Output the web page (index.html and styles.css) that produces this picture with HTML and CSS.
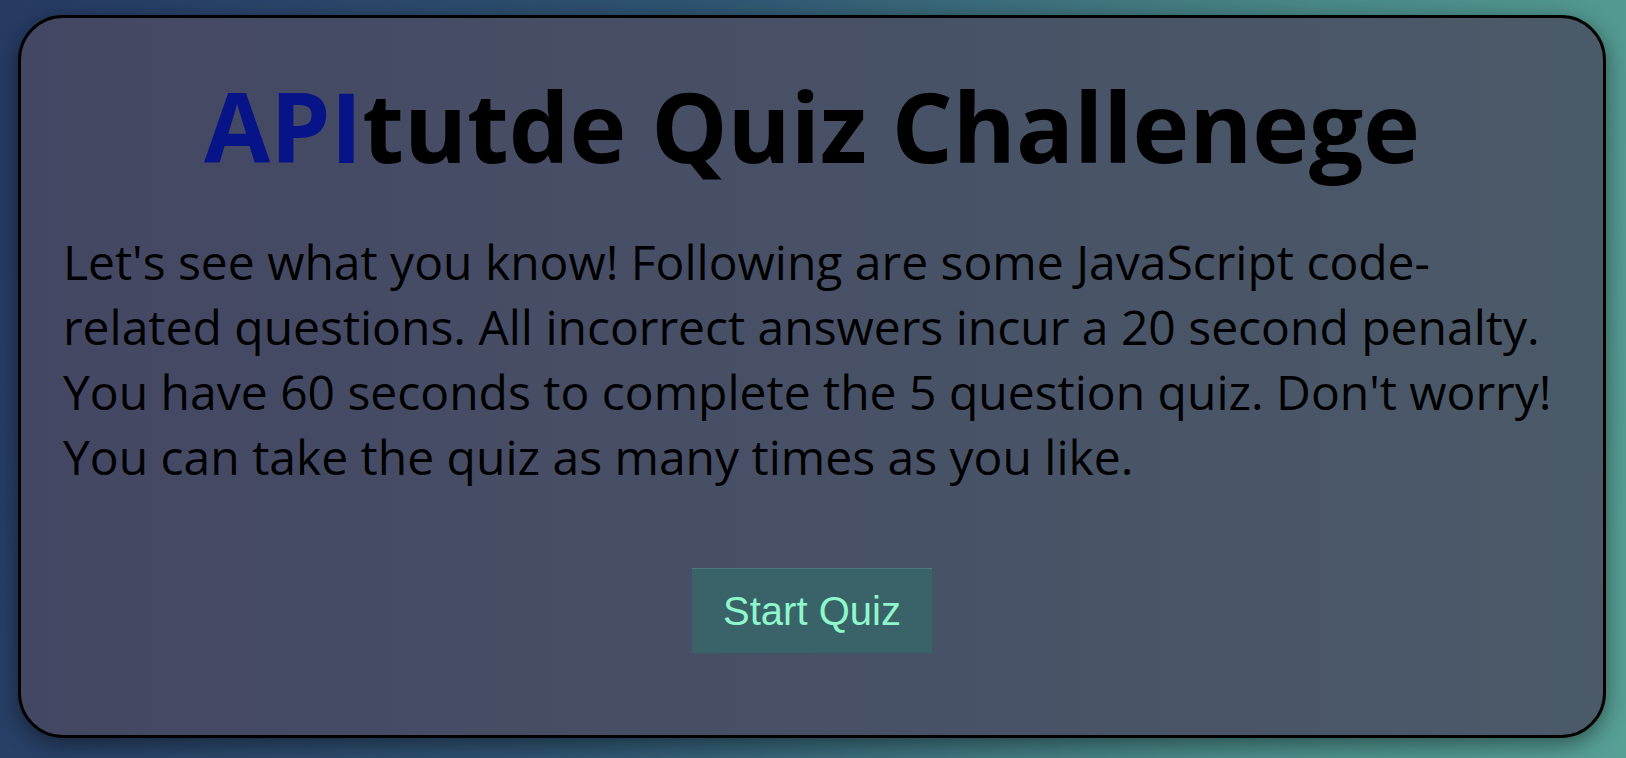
FILE: index.html
```html
<!DOCTYPE html>
<html lang="en">
<head>
<meta charset="utf-8">
<title>APItutde Quiz Challenege</title>
<link rel="stylesheet" href="styles.css">
</head>
<body>
  <main class="card">
    <h1 class="title"><span class="title-accent">API</span>tutde Quiz Challenege</h1>
    <p class="intro">Let's see what you know! Following are some JavaScript code-related questions. All incorrect answers incur a 20 second penalty. You have 60 seconds to complete the 5 question quiz. Don't worry! You can take the quiz as many times as you like.</p>
    <div class="actions">
      <button class="start-btn" type="button">Start Quiz</button>
    </div>
  </main>
</body>
</html>
```

FILE: styles.css
```css
* {
  box-sizing: border-box;
}

html, body {
  height: 100%;
}

body {
  margin: 0;
  padding: 15px 20px 20px 18px;
  background: linear-gradient(100deg, #263a64 0%, #2f5572 40%, #4a8a88 75%, #57a096 100%);
  font-family: "Open Sans", sans-serif;
}

.card {
  height: 100%;
  border: 3px solid #000;
  border-radius: 45px;
  background: linear-gradient(to right, #444763, #4b5a69);
  box-shadow: 0 6px 22px rgba(0, 0, 0, 0.45);
  padding: 42px 42px 0 42px;
  display: flex;
  flex-direction: column;
}

.title {
  margin: 0;
  font-size: 96px;
  font-weight: 700;
  line-height: normal;
  color: #000;
  text-align: center;
}

.title-accent {
  color: #071488;
}

.intro {
  margin: 38px 0 0 0;
  font-size: 48px;
  font-weight: 400;
  line-height: normal;
  color: #000;
}

.actions {
  display: flex;
  justify-content: center;
  margin-top: 79px;
}

.start-btn {
  width: 240px;
  height: 85px;
  border: 0;
  border-top: 1px solid #4a7a7c;
  background: #3a6369;
  color: #8ef7cb;
  font-family: "Liberation Sans", Arial, sans-serif;
  font-size: 40px;
  padding: 0;
  cursor: pointer;
}
```
